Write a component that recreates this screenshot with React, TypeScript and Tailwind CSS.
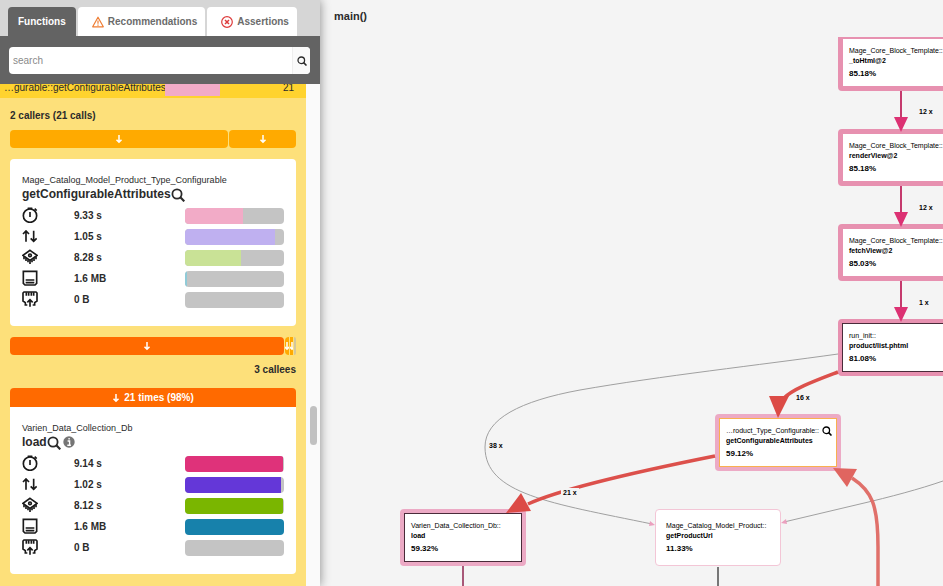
import type { ReactNode } from "react";

const METRIC_ICONS: Record<string, ReactNode> = {
  time: (
    <>
      <circle cx="24" cy="26" r="20" />
      <path d="M24 15v15M17 4h14M38 5l6 6" />
    </>
  ),
  io: <path d="M12 41V9M3 18l9-9 9 9M35 8v32M26 31l9 9 9-9" />,
  cpu: (
    <>
      <path d="M24 4L45 19 24 34 3 19z" />
      <circle cx="24" cy="19" r="4" />
      <path d="M6 22v9M12 27v9M18 31v9M24 34v11M30 31v9M36 27v9M42 22v9" />
    </>
  ),
  memory: (
    <>
      <path d="M4 4h40v36l-5 5H9l-5-5z" />
      <path d="M11 30h26M11 38h26" />
    </>
  ),
  network: (
    <>
      <path d="M16 42H10V35L3 30V6l3-3h36l3 3v24l-7 5v7h-6" />
      <path d="M24 47V26M16 34l8-8 8 8M13 4v10M20 4v10M28 4v10M35 4v10" />
    </>
  ),
};

type Metric = { icon: string; label: string; value: string; percent: number; color: string };

const CURRENT_METRICS: Metric[] = [
  { icon: "time", label: "Time", value: "9.33 s", percent: 59, color: "bg-[#f2abc7]" },
  { icon: "io", label: "I/O", value: "1.05 s", percent: 91, color: "bg-[#bfb0f0]" },
  { icon: "cpu", label: "CPU", value: "8.28 s", percent: 57, color: "bg-[#c9e296]" },
  { icon: "memory", label: "Memory", value: "1.6 MB", percent: 2, color: "bg-[#8fcbd8]" },
  { icon: "network", label: "Network", value: "0 B", percent: 0, color: "bg-[#c4c4c4]" },
];

const CALLEE_METRICS: Metric[] = [
  { icon: "time", label: "Time", value: "9.14 s", percent: 99, color: "bg-[#df327a]" },
  { icon: "io", label: "I/O", value: "1.02 s", percent: 97, color: "bg-[#6437d8]" },
  { icon: "cpu", label: "CPU", value: "8.12 s", percent: 99, color: "bg-[#7ab600]" },
  { icon: "memory", label: "Memory", value: "1.6 MB", percent: 100, color: "bg-[#1781ab]" },
  { icon: "network", label: "Network", value: "0 B", percent: 0, color: "bg-[#c4c4c4]" },
];

type GraphNode = {
  x: number;
  y: number;
  cls: string;
  fn: string;
  percent: string;
  frame: string;
  inner: string;
  zoomable?: boolean;
};

const NODES: GraphNode[] = [
  { x: 518, y: -3, cls: "Mage_Core_Block_Template::", fn: "_toHtml@2", percent: "85.18%", frame: "border-[#e791b0]", inner: "border-[#e791b0]" },
  { x: 518, y: 92, cls: "Mage_Core_Block_Template::", fn: "renderView@2", percent: "85.18%", frame: "border-[#e791b0]", inner: "border-[#e791b0]" },
  { x: 518, y: 187, cls: "Mage_Core_Block_Template::", fn: "fetchView@2", percent: "85.03%", frame: "border-[#e791b0]", inner: "border-[#e791b0]" },
  { x: 518, y: 282, cls: "run_init::", fn: "product/list.phtml", percent: "81.08%", frame: "border-[#e791b0]", inner: "border-[#4a2b3a]" },
  { x: 395, y: 377, cls: "…roduct_Type_Configurable::", fn: "getConfigurableAttributes", percent: "59.12%", frame: "border-[#ecaac5]", inner: "border-[#f9b04f]", zoomable: true },
  { x: 80, y: 472, cls: "Varien_Data_Collection_Db::", fn: "load", percent: "59.32%", frame: "border-[#ecaac5]", inner: "border-[#4a2b3a]" },
  { x: 335, y: 472, cls: "Mage_Catalog_Model_Product::", fn: "getProductUrl", percent: "11.33%", frame: "", inner: "border-[#f3c6d6]" },
];

const EDGE_LABELS = [
  { x: 597, y: 70, text: "12 x" },
  { x: 597, y: 166, text: "12 x" },
  { x: 597, y: 261, text: "1 x" },
  { x: 474, y: 356, text: "16 x" },
  { x: 167, y: 404, text: "38 x" },
  { x: 241, y: 451, text: "21 x" },
];

function SearchIcon({ className }: { className: string }) {
  return (
    <svg viewBox="0 0 14 14" className={className} fill="none" stroke="currentColor" strokeWidth="1.8" aria-hidden="true">
      <circle cx="6" cy="6" r="4.6" />
      <path d="M9.3 9.3l4 4" strokeWidth="2.2" />
    </svg>
  );
}

function DownArrow() {
  return (
    <svg viewBox="0 0 8 10" className="w-2 h-2.5 shrink-0" fill="none" stroke="white" strokeWidth="1.5" aria-hidden="true">
      <path d="M4 1v7M1.5 5.8L4 8.3l2.5-2.5" />
    </svg>
  );
}

function MetricRow({ metric }: { metric: Metric }) {
  return (
    <li className="flex items-center h-[21px]">
      <svg viewBox="0 0 48 48" className="w-4 h-4 mb-0.5" fill="none" stroke="#1a1a1a" strokeWidth="5" role="img" aria-label={metric.label}>
        {METRIC_ICONS[metric.icon]}
      </svg>
      <span className="ml-9 flex-1 font-bold text-[10px]">{metric.value}</span>
      <div className="w-[99px] h-4 rounded bg-[#c4c4c4] overflow-hidden">
        <div className={`h-full ${metric.color}`} style={{ width: `${metric.percent}%` }} />
      </div>
    </li>
  );
}

function FunctionCard({ cls, fn, metrics, info }: { cls: string; fn: string; metrics: Metric[]; info?: boolean }) {
  return (
    <div className="bg-white px-3 pt-3.5 pb-4">
      <p className="text-[9px] leading-[14px]">{cls}</p>
      <div className="flex items-center h-[14px]">
        <h3 className="font-bold text-[12px] leading-[14px]">{fn}</h3>
        <button aria-label="Zoom to function">
          <SearchIcon className="w-3.5 h-3.5 mt-0.5" />
        </button>
        {info && (
          <button aria-label="Function info" className="ml-0.5">
            <svg viewBox="0 0 12 12" className="w-3 h-3" aria-hidden="true">
              <circle cx="6" cy="6" r="5.7" fill="#757575" />
              <path d="M4.6 5h2v4M4.3 9.2h3.6M5.4 2.8h1.4" fill="none" stroke="white" strokeWidth="1.4" />
            </svg>
          </button>
        )}
      </div>
      <ul className="mt-1">
        {metrics.map((metric) => (
          <MetricRow key={metric.label} metric={metric} />
        ))}
      </ul>
    </div>
  );
}

function Sidebar() {
  return (
    <aside className="relative z-10 w-80 shrink-0 flex flex-col bg-[#fafafa] shadow-[0_0_10px_rgba(0,0,0,0.45)]">
      <nav className="flex items-end gap-0.5 h-9 pl-2 bg-[#d6d6d6] font-bold text-[10px] text-[#6b6b6b]">
        <button className="h-[29px] px-2.5 rounded-t bg-[#636363] text-white">Functions</button>
        <button className="flex items-center gap-1 h-[29px] pl-3.5 pr-2 rounded-t bg-white">
          <svg viewBox="0 0 12 12" className="w-3 h-3" fill="none" stroke="#ef7d33" strokeLinejoin="round" strokeWidth="1.2" aria-hidden="true">
            <path d="M6 1.2L11.3 10.8H.7zM6 4.5v3.2M6 8.6v1.1" />
          </svg>
          Recommendations
        </button>
        <button className="flex items-center gap-1 h-[29px] pl-3.5 pr-2 rounded-t bg-white">
          <svg viewBox="0 0 12 12" className="w-3 h-3" fill="none" stroke="#dd3b3b" strokeWidth="1.2" aria-hidden="true">
            <circle cx="6" cy="6" r="5.3" />
            <path d="M4 4l4 4M8 4L4 8" strokeWidth="1.5" />
          </svg>
          Assertions
        </button>
      </nav>

      <div className="bg-[#636363] pl-[9px] pr-2.5 pt-[11px] pb-2.5">
        <form className="flex h-[27px] rounded-sm bg-white overflow-hidden" onSubmit={(e) => e.preventDefault()}>
          <input type="text" aria-label="Search functions" placeholder="search" className="flex-1 min-w-0 px-1 text-[10px] outline-none placeholder:text-[#8a8a8a]" />
          <button aria-label="Search" className="w-[18px] flex items-center justify-center border-l border-[#eeeeee] bg-[#fafafa]">
            <SearchIcon className="w-2.5 h-2.5" />
          </button>
        </form>
      </div>

      <div className="flex flex-1 min-h-0 overflow-hidden">
        <div className="flex-1 min-w-0 bg-[#fde07a]">
          {/* Selected row, scrolled half under the search bar */}
          <div className="flex items-center h-[22px] -mt-2 pl-1 pr-3 bg-[#ffd32e] text-[10px]">
            <span className="w-[161px] whitespace-nowrap leading-3 pt-0.5">…gurable::getConfigurableAttributes</span>
            <div className="w-[55px] h-5 mb-0.5 bg-[#f2abc7]" />
            <span className="ml-auto leading-3 pt-0.5">21</span>
          </div>

          <div className="px-2.5">
            <h2 className="mt-2.5 font-bold text-[10px] leading-4">2 callers (21 calls)</h2>
            <div className="flex gap-px mt-1.5 h-[18px]">
              <button aria-label="First caller" className="flex-[218] flex items-center justify-center rounded bg-[#ffaa00]">
                <DownArrow />
              </button>
              <button aria-label="Second caller" className="flex-[67] flex items-center justify-center rounded bg-[#ffaa00]">
                <DownArrow />
              </button>
            </div>

            <div className="mt-[11px] rounded overflow-hidden">
              <FunctionCard cls="Mage_Catalog_Model_Product_Type_Configurable" fn="getConfigurableAttributes" metrics={CURRENT_METRICS} />
            </div>

            <div className="flex gap-px mt-[11px] h-[18px]">
              <button aria-label="First callee" className="flex-1 flex items-center justify-center rounded bg-[#ff6a00]">
                <DownArrow />
              </button>
              <button aria-label="Second callee" className="w-1 flex items-center justify-center rounded-l-sm bg-[#ffaa00] overflow-hidden">
                <DownArrow />
              </button>
              <button aria-label="Third callee" className="w-[3px] flex items-center justify-center bg-[#ffaa00] overflow-hidden">
                <DownArrow />
              </button>
              <div className="w-0.5 rounded-r-sm bg-[#d3c79c]" />
            </div>
            <h2 className="mt-[7px] font-bold text-[10px] leading-4 text-right">3 callees</h2>

            <div className="mt-[10px] rounded overflow-hidden">
              <button className="w-full h-[19px] flex items-center justify-center gap-1 bg-[#ff6a00] text-white font-bold text-[10px]">
                <DownArrow />
                21 times (98%)
              </button>
              <FunctionCard cls="Varien_Data_Collection_Db" fn="load" metrics={CALLEE_METRICS} info />
            </div>
          </div>
        </div>
        <div className="w-3.5 flex justify-center">
          <div className="mt-[322px] w-[7px] h-[39px] rounded-full bg-[#c1c1c1]" />
        </div>
      </div>
    </aside>
  );
}

function Edges() {
  return (
    <svg className="absolute inset-0 w-full h-full" fill="none" aria-hidden="true">
      <g stroke="#a0a0a0">
        <path d="M518 317C440 328 340 339 260 353C200 364 165 382 165 410C165 457 230 466 332 487" />
        <path d="M623 444C600 452 570 460 540 467L464 485" />
      </g>
      <path d="M398 530V549" stroke="#777777" strokeWidth="2" />
      <path d="M143 529V549" stroke="#a85878" strokeWidth="2" />
      <g fill="#eba0be">
        <path d="M335 488l-5-4-1 5z" />
        <path d="M461 486l5-4 1 5z" />
      </g>

      <g stroke="#c53a6d" strokeWidth="2">
        <path d="M581 53V82" />
        <path d="M581 148V177" />
        <path d="M581 244V272" />
      </g>
    </svg>
  );
}

function ArrowHeads() {
  return (
    <svg className="absolute inset-0 w-full h-full pointer-events-none" fill="none" aria-hidden="true">
      <g fill="#dc3173">
        <path d="M574 80h14l-7 15z" />
        <path d="M574 175h14l-7 15z" />
        <path d="M574 270h14l-7 15z" />
      </g>
      <path d="M518 335C497 343 472 352 463 362" stroke="#dc504b" strokeWidth="3.5" />
      <path d="M449 359h20l-11 22z" fill="#dc4b46" />
      <path d="M395 419C330 432 245 450 208 467" stroke="#dc504b" strokeWidth="3.5" />
      <path d="M186 476L201 456L211 474z" fill="#dc4b46" />
      <path d="M558 549V510C558 468 552 454 532 441" stroke="#e0706a" strokeWidth="3.5" />
      <path d="M513 431L537 432L527 450z" fill="#e06560" />
    </svg>
  );
}

function NodeBox({ node }: { node: GraphNode }) {
  return (
    <div className={`absolute w-[126px] ${node.frame ? `border-4 rounded ${node.frame}` : ""}`} style={{ left: node.x, top: node.y }}>
      <div className={`relative border bg-white text-black whitespace-nowrap text-[7px] leading-[10px] ${node.inner} ${node.frame ? "px-1.5 pt-[7px] pb-1.5" : "rounded-sm px-2.5 pt-[11px] pb-2.5"}`}>
        <p>{node.cls}</p>
        <p className="font-bold">{node.fn}</p>
        <p className="mt-0.5 font-bold text-[8px] leading-[12px]">{node.percent}</p>
        {node.zoomable && (
          <button aria-label="Zoom to node" className="absolute top-[7px] right-1">
            <SearchIcon className="w-2.5 h-2.5" />
          </button>
        )}
      </div>
    </div>
  );
}

export default function App() {
  return (
    <div className="flex h-screen overflow-hidden bg-[#f4f4f4] text-[#2b2b2b] font-['Liberation_Sans',Arial,sans-serif]">
      <Sidebar />
      <main className="flex-1 min-w-0 flex flex-col">
        <h1 className="h-[37px] pl-3.5 pt-2 font-bold text-[11px] leading-4">main()</h1>
        <div className="relative flex-1 overflow-hidden">
          <Edges />
          {NODES.map((node) => (
            <NodeBox key={`${node.x}-${node.y}`} node={node} />
          ))}
          <ArrowHeads />
          {EDGE_LABELS.map((label) => (
            <span key={`${label.x}-${label.y}`} className="absolute px-0.5 bg-[#f4f4f4] text-black font-bold text-[7px] leading-[10px]" style={{ left: label.x, top: label.y }}>
              {label.text}
            </span>
          ))}
        </div>
      </main>
    </div>
  );
}
